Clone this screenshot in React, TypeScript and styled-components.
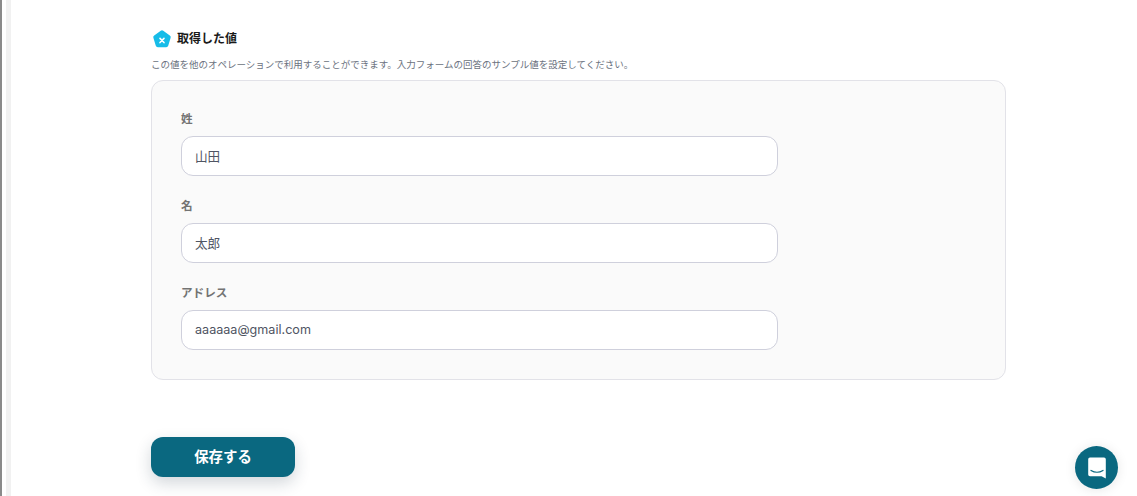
import React from 'react';
import styled, { createGlobalStyle } from 'styled-components';

const GlobalStyle = createGlobalStyle`
  html, body {
    margin: 0;
    padding: 0;
    height: 100%;
    overflow: hidden;
    background: #fff;
    font-family: Inter, "Noto Sans CJK JP", "Noto Sans", sans-serif;
  }
`;

const Shell = styled.div`
  display: flex;
  height: 496px;
`;

const EdgeBar = styled.div`
  flex: none;
  width: 2px;
  background: #8a8a8a;
  border-right: 4px solid #fff;
  box-shadow: 5px 0 0 0 #f1f1f1;
`;

const Main = styled.main`
  flex: 1;
  padding: 29px 0 0 145px;
`;

const Content = styled.div`
  width: 855px;
`;

const TitleRow = styled.div`
  display: flex;
  align-items: center;
  gap: 5px;
  height: 20px;
  padding-left: 1px;
`;

const Title = styled.h2`
  margin: 0;
  font-size: 12px;
  font-weight: 700;
  line-height: 20px;
  color: #1a1a1a;
`;

const Hint = styled.p`
  margin: 8px 0 0;
  font-size: 9.5px;
  line-height: 16px;
  color: #6b7280;
`;

const Card = styled.section`
  box-sizing: border-box;
  margin-top: 7px;
  height: 300px;
  padding: 28px 29px 0;
  background: #fafafa;
  border: 1px solid #e2e2e8;
  border-radius: 12px;
  display: flex;
  flex-direction: column;
  gap: 20.6px;
`;

const Field = styled.div`
  display: flex;
  flex-direction: column;
  gap: 6px;
  width: 597px;
`;

const Label = styled.label`
  font-size: 11.6px;
  font-weight: 600;
  line-height: 21px;
  color: #737373;
`;

const Input = styled.div`
  box-sizing: border-box;
  height: 39.5px;
  padding: 0 13px;
  display: flex;
  align-items: center;
  background: #fff;
  border: 1px solid #cfd0dc;
  border-radius: 12px;
  font-size: 12.6px;
  color: #4f5563;
`;

const SaveButton = styled.button`
  display: block;
  width: 144px;
  height: 40px;
  margin-top: 57px;
  padding: 0 0 3px;
  border: 0;
  border-radius: 12px;
  background: #0a6880;
  color: #fff;
  font-family: inherit;
  font-size: 14.4px;
  font-weight: 700;
  box-shadow: 0 6px 16px rgba(30, 50, 70, 0.2);
`;

const ChatButton = styled.button`
  position: fixed;
  left: 1075px;
  top: 446px;
  width: 43px;
  height: 43px;
  padding: 0;
  border: 0;
  border-radius: 50%;
  background: #0a6880;
  display: flex;
  align-items: center;
  justify-content: center;
  box-shadow: 0 1px 12px rgba(0, 0, 0, 0.1);
`;

const fields = [
  { label: '姓', value: '山田' },
  { label: '名', value: '太郎' },
  { label: 'アドレス', value: 'aaaaaa@gmail.com' },
];

const BadgeIcon = () => (
  <svg width="20" height="20" viewBox="0 0 19 19">
    <path
      d="M8.3 1.7a2 2 0 0 1 2.4 0l6.2 4.4a2 2 0 0 1 .8 2.3l-2.3 7.6a2 2 0 0 1-1.9 1.4H5.5a2 2 0 0 1-1.9-1.4L1.3 8.4a2 2 0 0 1 .8-2.3z"
      fill="#16bce8"
    />
    <path
      d="M7.6 8.9l3.8 4M11.4 8.9l-3.8 4"
      stroke="#fff"
      strokeWidth="1.5"
      strokeLinecap="round"
      fill="none"
    />
  </svg>
);

const ChatIcon = () => (
  <svg width="18" height="22" viewBox="0 0 18 22">
    <path
      d="M2 .5h14A1.8 1.8 0 0 1 17.8 2.3v19.2l-4.2-2.2H2A1.8 1.8 0 0 1 .2 17.5V2.3A1.8 1.8 0 0 1 2 .5z"
      fill="#fff"
    />
    <path
      d="M3 13.4c3.6 2.2 8.4 2.2 12 0"
      stroke="#0a6880"
      strokeWidth="1.2"
      strokeLinecap="round"
      fill="none"
    />
  </svg>
);

export default function App() {
  return (
    <>
      <GlobalStyle />
      <Shell>
        <EdgeBar />
        <Main>
          <Content>
            <TitleRow>
              <BadgeIcon />
              <Title>取得した値</Title>
            </TitleRow>
            <Hint>この値を他のオペレーションで利用することができます。入力フォームの回答のサンプル値を設定してください。</Hint>
            <Card>
              {fields.map((f) => (
                <Field key={f.label}>
                  <Label>{f.label}</Label>
                  <Input>{f.value}</Input>
                </Field>
              ))}
            </Card>
            <SaveButton>保存する</SaveButton>
          </Content>
        </Main>
      </Shell>
      <ChatButton aria-label="chat">
        <ChatIcon />
      </ChatButton>
    </>
  );
}
